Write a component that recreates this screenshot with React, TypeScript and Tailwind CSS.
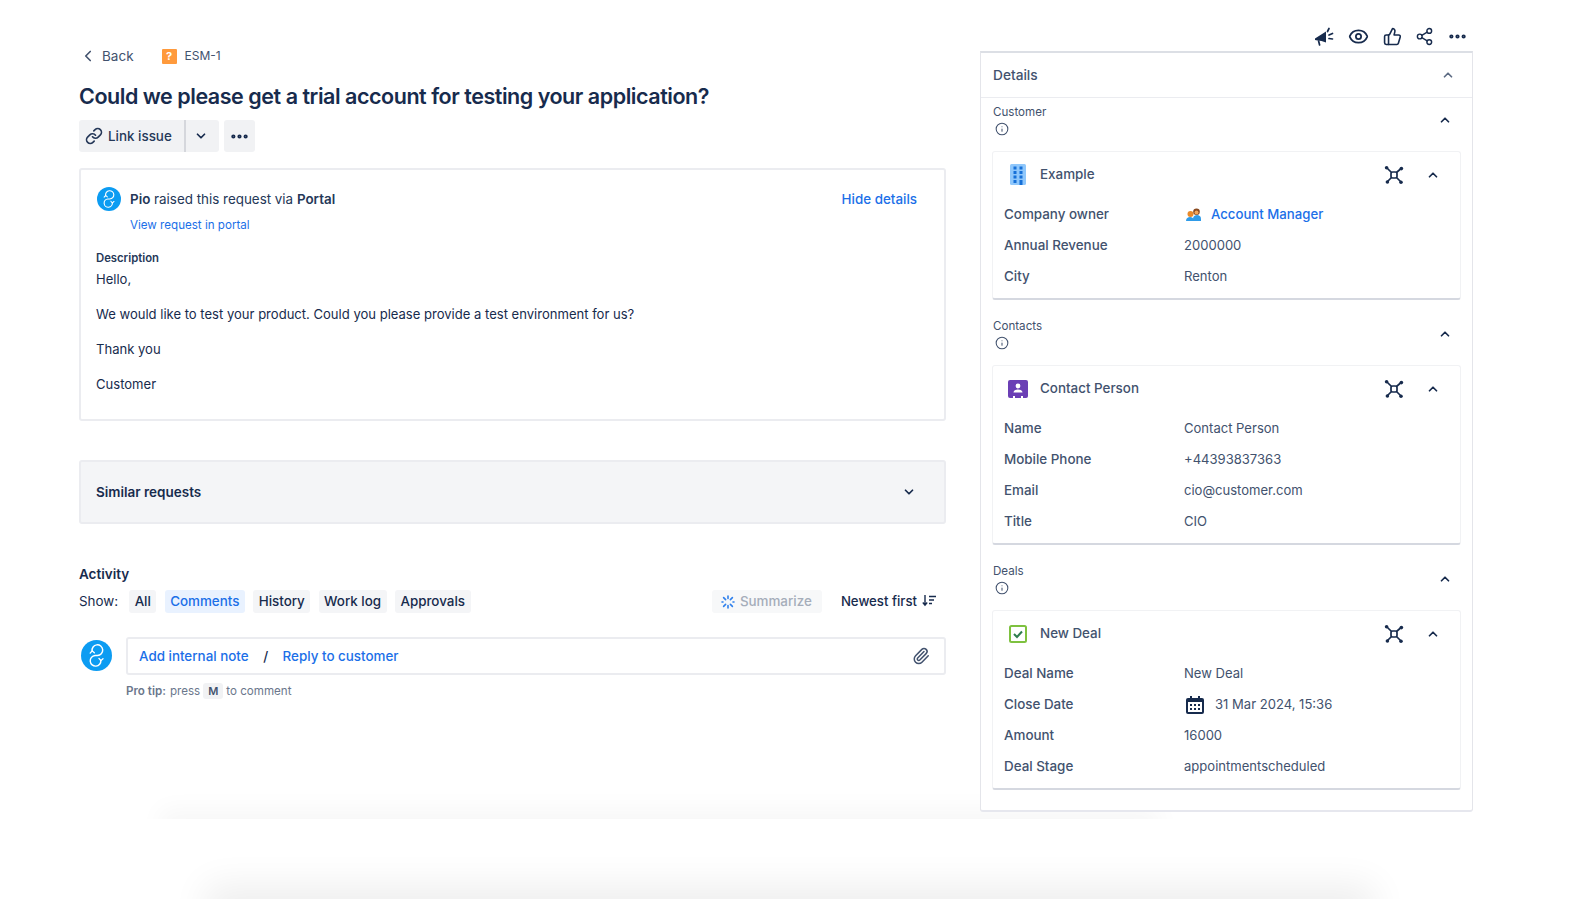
import { ChevronDown, ChevronLeft, ChevronUp, Ellipsis, Eye, Info, Link, Paperclip, Share2, ThumbsUp } from "lucide-react";
import type { ReactNode } from "react";

const Logo = ({ size }: { size: number }) => (
  <svg width={size} height={size} viewBox="0 0 32 32" className="shrink-0">
    <circle cx="16" cy="16" r="16" fill="#0c9cf2" />
    <path
      d="M11.500 11.500A5.500 5.500 0 1 1 17 16h-2.500a5.500 5.500 0 1 0 6 5"
      fill="none"
      stroke="#fff"
      strokeWidth="1.500"
      strokeLinecap="round"
    />
    <path d="m9.500 13.500 2-2.300 2.300 2M18.500 19l2 2.300 2.200-2" fill="none" stroke="#fff" strokeWidth="1.400" strokeLinecap="round" />
  </svg>
);

const Megaphone = () => (
  <svg width="20" height="20" viewBox="0 0 20 20" fill="none" className="mr-[1px]">
    <path d="M1 11.500 12 4.500v11l-4.500-1.600-4-.4L1 13z" fill="#172b4d" />
    <path d="m4.600 14 1 4M13.500 4.500l1.500-3M15 8l3.500-1.500M15 11.500l3.500.5" stroke="#172b4d" strokeWidth="1.700" strokeLinecap="round" />
  </svg>
);

const HubIcon = () => (
  <svg width="20" height="20" viewBox="0 0 20 20" fill="none" stroke="#172b4d" strokeWidth="1.700">
    <rect x="7" y="7" width="6" height="6" rx="1.600" />
    <path d="M7.500 7.500 3 3M12.500 7.500 16.500 4M7.500 12.500 3.500 16.500M12.500 12.500l4 4" />
    <g fill="#172b4d" stroke="none">
      <circle cx="2.600" cy="2.800" r="1.800" />
      <circle cx="17.400" cy="3.600" r="1.800" />
      <circle cx="3.400" cy="17" r="1.800" />
      <circle cx="17" cy="17.200" r="1.800" />
    </g>
  </svg>
);

const BuildingIcon = () => (
  <svg width="16" height="21" viewBox="0 0 16 21">
    <rect width="16" height="21" rx="1.500" fill="#8fc7fb" />
    <g fill="#1670d8">
      <rect x="3.500" y="2.500" width="3" height="3" />
      <rect x="9.500" y="2.500" width="3" height="3" />
      <rect x="3.500" y="7" width="3" height="3" />
      <rect x="9.500" y="7" width="3" height="3" />
      <rect x="3.500" y="11.500" width="3" height="3" />
      <rect x="9.500" y="11.500" width="3" height="3" />
      <rect x="3.500" y="16" width="3" height="3" />
      <rect x="9.500" y="16" width="3" height="5" />
    </g>
  </svg>
);

const ContactIcon = () => (
  <svg width="20" height="18" viewBox="0 0 20 18">
    <rect width="20" height="18" rx="2" fill="#6b3fb5" />
    <circle cx="10" cy="6" r="2.400" fill="#fff" />
    <path d="M5.500 12.500c0-2 2-3 4.500-3s4.500 1 4.500 3z" fill="#fff" />
    <path d="M5 16h2v2H5zM13 16h2v2h-2z" fill="#fff" />
  </svg>
);

const DealIcon = () => (
  <svg width="18" height="18" viewBox="0 0 18 18" fill="none">
    <rect x="1" y="1" width="16" height="16" rx="1.500" fill="#fff" stroke="#7ec13f" strokeWidth="2" />
    <path d="m5 9 3 3 5-5.500" stroke="#2f7d4f" strokeWidth="2" />
  </svg>
);

const CalendarIcon = () => (
  <svg width="18" height="18" viewBox="0 0 18 18">
    <rect y="2" width="18" height="16" rx="2" fill="#172b4d" />
    <rect x="2" y="6" width="14" height="10" fill="#fff" />
    <path d="M4 0h2v3H4zM12 0h2v3h-2z" fill="#172b4d" />
    <path d="M4 8h2v2H4zM8 8h2v2H8zM12 8h2v2h-2zM4 12h2v2H4zM8 12h2v2H8zM12 12h2v2h-2z" fill="#172b4d" />
  </svg>
);

const PeopleIcon = () => (
  <svg width="15" height="13" viewBox="0 0 15 13" className="shrink-0">
    <path d="M0 13c0-3 2-4 4-4s4 1 4 4z" fill="#2f9be8" />
    <path d="M7 11c0-3 2-4 4-4s4 1 4 4v2H7z" fill="#2f9be8" />
    <circle cx="4.500" cy="6" r="3" fill="#e98a2b" />
    <circle cx="10.500" cy="3.800" r="3.300" fill="#8a4a1f" />
    <circle cx="10.500" cy="4.600" r="2" fill="#f2a65a" />
  </svg>
);

const SummarizeIcon = () => (
  <svg width="14" height="14" viewBox="0 0 14 14" stroke="#2f80ed" strokeWidth="1.600" strokeLinecap="round">
    <path d="M7 1v2.500M7 10.500V13M1 7h1M12 7h1M2.600 2.600l2 2M11.400 2.600l-2 2M2.600 11.400l2-2M11.400 11.400l-2-2" />
  </svg>
);

const SortIcon = () => (
  <svg width="14" height="12" viewBox="0 0 14 12" fill="none" stroke="#172b4d" strokeWidth="1.400">
    <path d="M3 0v10M.8 7.500 3 10.200l2.200-2.700M7 1.500h7M7 5h5M7 8.500h3" />
  </svg>
);

const Row = ({ label, children }: { label: string; children: ReactNode }) => (
  <div className="flex h-[31px] items-center">
    <div className="w-[180px] text-[13.4px] font-medium">{label}</div>
    <div className="flex items-center">{children}</div>
  </div>
);

const RecordCard = ({ icon, title, children }: { icon: ReactNode; title: string; children: ReactNode }) => (
  <div className="rounded-[3px] border border-[#f1f2f4] border-b-2 border-b-[#d5d8e0] bg-white px-[11px] pb-[6px] text-[13.050px] text-[#42526e]">
    <div className="flex h-[47px] items-center pb-[2px]">
      <div className="flex w-[36px] justify-center pr-[8px]">{icon}</div>
      <div className="text-[13.4px] font-medium">{title}</div>
      <div className="ml-auto mr-[9px] flex items-center gap-[22px] text-[#172b4d]">
        <HubIcon />
        <ChevronUp size={14} strokeWidth={3} />
      </div>
    </div>
    {children}
  </div>
);

const Section = ({ label, children }: { label: string; children: ReactNode }) => (
  <div className="pb-[12px]">
    <div className="flex h-[53px] items-start justify-between pt-[6px]">
      <div className="ml-[1px] text-[11.6px] leading-[16px] text-[#42526e]">
        {label}
        <Info size={14} strokeWidth={1.800} className="ml-[2px] mt-[2px]" />
      </div>
      <ChevronUp size={14} strokeWidth={3} className="mr-[9px] mt-[9px] text-[#172b4d]" />
    </div>
    {children}
  </div>
);

const FilterPill = ({ children, active }: { children: ReactNode; active?: boolean }) => (
  <div className={`flex h-[23px] items-center rounded-[3px] px-[5.500px] ${active ? "bg-[#e9f2ff] text-[#1b6fe8]" : "bg-[#f4f5f7]"}`}>{children}</div>
);

export default function App() {
  return (
    <div className="relative h-[899px] overflow-hidden bg-white font-['Inter',sans-serif] text-[13.050px] text-[#172b4d]">
      <div className="flex pl-[79px]">
        {/* Main column */}
        <div className="w-[867px] pt-[46px]">
          <div className="flex h-[20px] items-center text-[13.500px] text-[#42526e]">
            <ChevronLeft size={18} strokeWidth={2.200} />
            <span className="ml-[5px]">Back</span>
            <span className="ml-[28px] flex h-[15px] w-[15px] items-center justify-center rounded-[1px] bg-[#ff9a3c] text-[11px] font-bold leading-none text-white">?</span>
            <span className="ml-[8px] text-[12px]">ESM-1</span>
          </div>

          <h1 className="mt-[16px] text-[21.500px] font-semibold leading-[28px] tracking-[-0.46px]">Could we please get a trial account for testing your application?</h1>

          <div className="mt-[10px] flex h-[32px] items-center">
            <div className="flex h-full w-[105px] items-center gap-[5px] rounded-l-[3px] bg-[#f1f2f4] pl-[6px] text-[13.400px] font-medium text-[#253858]">
              <Link size={18} strokeWidth={2.200} />
              Link issue
            </div>
            <div className="flex h-full w-[35px] items-center justify-center rounded-r-[3px] border-l-2 border-[#d5d7dc] bg-[#f1f2f4] pr-[3px]">
              <ChevronDown size={14} strokeWidth={3} />
            </div>
            <div className="ml-[5px] flex h-full w-[31px] items-center justify-center rounded-[3px] bg-[#f1f2f4]">
              <Ellipsis size={21} strokeWidth={2.800} />
            </div>
          </div>

          <div className="mt-[16px] h-[253px] rounded-[3px] border-2 border-[#ebecf0] px-[15px] pt-[17px]">
            <div className="flex items-center">
              <span className="ml-[1px]"><Logo size={24} /></span>
              <div className="ml-[9px] text-[13.400px] text-[#253858]">
                <span className="font-semibold">Pio</span> raised this request via <span className="font-semibold">Portal</span>
              </div>
              <div className="ml-auto mr-[12px] text-[13.400px] font-medium text-[#1b6fe8]">Hide details</div>
            </div>
            <div className="ml-[34px] mt-[6px] text-[11.600px] leading-[16px] text-[#1b6fe8]">View request in portal</div>
            <div className="mt-[17px] text-[11.300px] font-semibold leading-[16px] text-[#253858]">Description</div>
            <div className="mt-[3px] space-y-[15px] leading-[20px]">
              <p>Hello,</p>
              <p>We would like to test your product. Could you please provide a test environment for us?</p>
              <p>Thank you</p>
              <p>Customer</p>
            </div>
          </div>

          <div className="mt-[39px] flex h-[64px] items-center justify-between rounded-[3px] border-2 border-[#ebecf0] bg-[#f4f5f7] pl-[15px] pr-[28px] text-[13.500px] font-semibold">
            Similar requests
            <ChevronDown size={14} strokeWidth={3} />
          </div>

          <div className="mt-[40px] text-[13.500px] font-semibold leading-[20px]">Activity</div>
          <div className="mt-[6px] flex h-[23px] items-center">
            <span className="mr-[11px] text-[13.400px]">Show:</span>
            <div className="flex gap-[8.250px] text-[13.400px] font-medium">
              <FilterPill>All</FilterPill>
              <FilterPill active>Comments</FilterPill>
              <FilterPill>History</FilterPill>
              <FilterPill>Work log</FilterPill>
              <FilterPill>Approvals</FilterPill>
            </div>
            <div className="ml-auto flex h-[23px] w-[110px] items-center gap-[5px] rounded-[3px] bg-[#f7f8f9] pl-[9px] text-[13.400px] font-medium text-[#a5adba]">
              <SummarizeIcon />
              Summarize
            </div>
            <div className="ml-[19px] mr-[10px] flex items-center gap-[5px] text-[13.200px] font-medium">
              Newest first
              <SortIcon />
            </div>
          </div>

          <div className="mt-[24px] flex">
            <div className="ml-[2px] mr-[14px] mt-[3px]">
              <Logo size={31} />
            </div>
            <div className="flex h-[38px] flex-1 items-center rounded-[3px] border-2 border-[#ebecf0] pl-[11px] pr-[14px] text-[13.400px] font-medium text-[#1b6fe8]">
              Add internal note
              <span className="mx-[14.500px] text-[#172b4d]">/</span>
              Reply to customer
              <Paperclip size={18} strokeWidth={2} className="ml-auto text-[#42526e]" />
            </div>
          </div>
          <div className="ml-[47px] mt-[8px] flex items-center text-[11.600px] leading-[16px] text-[#6b778c]">
            <span className="font-semibold">Pro tip:</span>
            <span className="ml-[4px]">press</span>
            <span className="ml-[3px] mr-[3px] rounded-[3px] bg-[#f1f2f4] px-[5px] text-[11px] font-semibold text-[#42526e]">M</span>
            to comment
          </div>
        </div>

        {/* Details column */}
        <div className="relative z-10 ml-[34px] w-[493px]">
          <div className="flex h-[51px] items-center justify-end gap-[13px] pr-[5px] pt-[22px]">
            <Megaphone />
            <Eye size={21} strokeWidth={2} />
            <ThumbsUp size={19} strokeWidth={2} className="ml-[1px]" />
            <Share2 size={19} strokeWidth={1.800} />
            <Ellipsis size={21} strokeWidth={2.800} />
          </div>
          <div className="h-[761px] rounded-b-[3px] border-x border-t-2 border-b-2 border-x-[#e4e5ea] border-t-[#dcdfe5] border-b-[#e6e7ee] bg-white">
            <div className="flex h-[45px] items-center justify-between border-b border-[#ebecf0] pl-[12px] pr-[17px] text-[13.700px] font-medium text-[#42526e]">
              Details
              <ChevronUp size={14} strokeWidth={3} className="text-[#5e6c84]" />
            </div>
            <div className="px-[11px]">
              <Section label="Customer">
                <RecordCard icon={<BuildingIcon />} title="Example">
                  <Row label="Company owner">
                    <span className="ml-[2px] mr-[10px]"><PeopleIcon /></span>
                    <span className="text-[13.200px] font-medium text-[#1b6fe8]">Account Manager</span>
                  </Row>
                  <Row label="Annual Revenue">2000000</Row>
                  <Row label="City">Renton</Row>
                </RecordCard>
              </Section>
              <Section label="Contacts">
                <RecordCard icon={<ContactIcon />} title="Contact Person">
                  <Row label="Name">Contact Person</Row>
                  <Row label="Mobile Phone">+44393837363</Row>
                  <Row label="Email">cio@customer.com</Row>
                  <Row label="Title">CIO</Row>
                </RecordCard>
              </Section>
              <Section label="Deals">
                <RecordCard icon={<DealIcon />} title="New Deal">
                  <Row label="Deal Name">New Deal</Row>
                  <Row label="Close Date">
                    <span className="ml-[2px] mr-[11px]"><CalendarIcon /></span>
                    31 Mar 2024, 15:36
                  </Row>
                  <Row label="Amount">16000</Row>
                  <Row label="Deal Stage">appointmentscheduled</Row>
                </RecordCard>
              </Section>
            </div>
          </div>
        </div>
      </div>

      {/* faint shadows left behind at the bottom of the page */}
      <div className="absolute left-[100px] top-[790px] h-[29px] w-[1120px] overflow-hidden">
        <div className="absolute left-[70px] top-[29px] h-[20px] w-[980px] shadow-[0_0_24px_10px_rgba(0,0,0,0.035)]" />
      </div>
      <div className="absolute bottom-0 left-[150px] h-[60px] w-[1280px] overflow-hidden">
        <div className="absolute left-[70px] top-[60px] h-[20px] w-[1140px] shadow-[0_0_36px_14px_rgba(0,0,0,0.07)]" />
      </div>
    </div>
  );
}
